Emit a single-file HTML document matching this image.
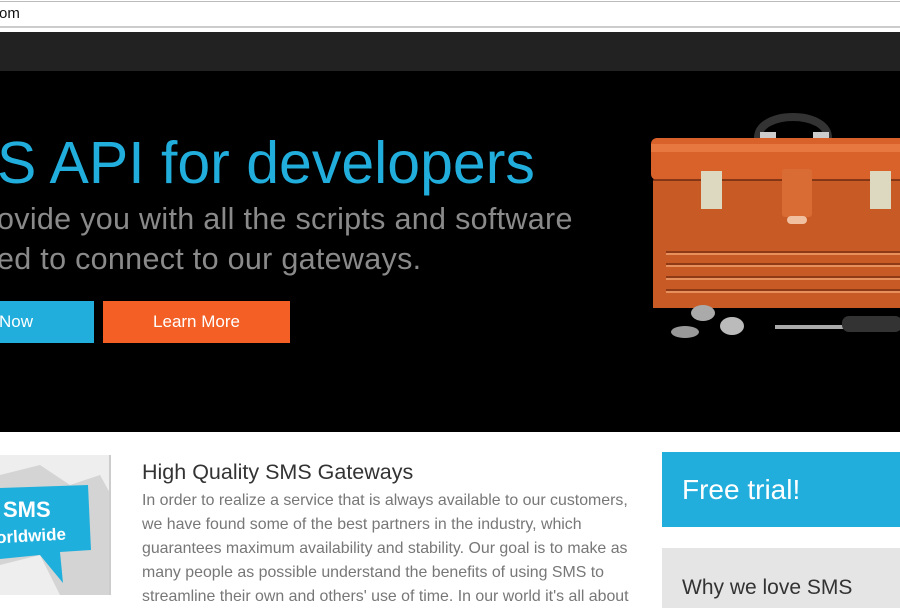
<!DOCTYPE html>
<html><head><style>
body{margin:0;width:900px;height:595px;overflow:hidden;position:relative;font-family:"Liberation Sans",sans-serif;background:#fff}
div,span{position:absolute}
.t{white-space:nowrap}
</style></head><body>
<div style="left:0;top:0;width:900px;height:32px;background:#fff"></div>
<div style="left:0;top:1px;width:900px;height:1px;background:#bbb"></div>
<div style="left:0;top:26px;width:900px;height:2px;background:#ccc"></div>
<div class="t" style="left:-1px;top:5px;font-size:15px;color:#111">om</div>
<div style="left:0;top:32px;width:900px;height:39px;background:#222"></div>
<div style="left:0;top:71px;width:900px;height:361px;background:#000"></div>
<div class="t" style="left:-3px;top:129px;font-size:59px;color:#21aedc">S API for developers</div>
<div class="t" style="left:-3px;top:199px;font-size:30.5px;color:#8a8a8a;line-height:40px;letter-spacing:0.3px">ovide you with all the scripts and software<br>ed to connect to our gateways.</div>
<div style="left:0;top:301px;width:94px;height:42px;background:#21aedc;color:#fff;font-size:17px;line-height:42px"><span style="left:-1px;top:0">Now</span></div>
<div style="left:103px;top:301px;width:187px;height:42px;background:#f35f24;color:#fff;font-size:17px;line-height:42px;text-align:center">Learn More</div>
<svg style="position:absolute;left:620px;top:100px" width="280" height="260">
<path d="M138 38 C138 10 208 10 208 38" stroke="#333" stroke-width="8" fill="none"/>
<rect x="140" y="32" width="16" height="8" fill="#ccc"/><rect x="193" y="32" width="16" height="8" fill="#ccc"/>
<rect x="31" y="38" width="260" height="42" rx="6" fill="#d9622a"/>
<rect x="31" y="44" width="260" height="8" fill="#f08850" opacity=".6"/>
<rect x="33" y="80" width="260" height="128" fill="#c85a26"/>
<line x1="33" y1="80" x2="290" y2="80" stroke="#6a2a10" stroke-width="1.5"/>
<g stroke="#e8905c" stroke-width="2"><line x1="46" y1="154" x2="290" y2="154"/><line x1="46" y1="166" x2="290" y2="166"/><line x1="46" y1="179" x2="290" y2="179"/><line x1="46" y1="192" x2="290" y2="192"/></g>
<g stroke="#7a3010" stroke-width="1.5"><line x1="46" y1="152" x2="290" y2="152"/><line x1="46" y1="164" x2="290" y2="164"/><line x1="46" y1="177" x2="290" y2="177"/><line x1="46" y1="190" x2="290" y2="190"/></g>
<rect x="81" y="71" width="21" height="38" fill="#ddd8c0"/><rect x="250" y="71" width="21" height="38" fill="#ddd8c0"/>
<rect x="162" y="69" width="30" height="48" rx="3" fill="#d96c34"/><rect x="167" y="116" width="20" height="8" rx="4" fill="#f0c0a0"/>
<ellipse cx="83" cy="213" rx="12" ry="8" fill="#aaa"/><ellipse cx="112" cy="226" rx="12" ry="9" fill="#bbb"/><ellipse cx="65" cy="232" rx="14" ry="6" fill="#999"/>
<rect x="155" y="225" width="70" height="4" fill="#aaa"/><rect x="222" y="216" width="60" height="16" rx="7" fill="#333"/>
</svg>
<svg style="position:absolute;left:0;top:455px" width="111" height="140">
<rect width="111" height="140" fill="#eee"/>
<path d="M0 20 L40 10 L70 30 L100 20 L111 40 L111 140 L60 140 L40 100 L0 110Z" fill="#d4d4d4"/>
<rect x="109" y="0" width="2" height="140" fill="#ccc"/>
<path d="M0 33 L88 30 L91 95 L60 97 L63 128 L40 100 L0 104Z" fill="#1fafdc"/>
<text x="3" y="62" font-family="Liberation Sans" font-weight="bold" font-size="22" fill="#fff">SMS</text>
<text x="-4" y="86" font-family="Liberation Sans" font-weight="bold" font-size="17" fill="#fff" transform="rotate(-3 40 80)">orldwide</text>
</svg>
<div class="t" style="left:142px;top:460px;font-size:21.5px;color:#333">High Quality SMS Gateways</div>
<div style="left:142px;top:489px;width:494px;font-size:15.9px;line-height:24px;color:#777">In order to realize a service that is always available to our customers, we have found some of the best partners in the industry, which guarantees maximum availability and stability. Our goal is to make as many people as possible understand the benefits of using SMS to streamline their own and others' use of time. In our world it's all about</div>
<div style="left:662px;top:452px;width:238px;height:75px;background:#21aedc"></div>
<div class="t" style="left:682px;top:474px;font-size:28px;color:#fff">Free trial!</div>
<div style="left:662px;top:548px;width:238px;height:60px;background:#e5e5e5"></div>
<div class="t" style="left:682px;top:576px;font-size:21px;color:#333">Why we love SMS</div>
</body></html>
